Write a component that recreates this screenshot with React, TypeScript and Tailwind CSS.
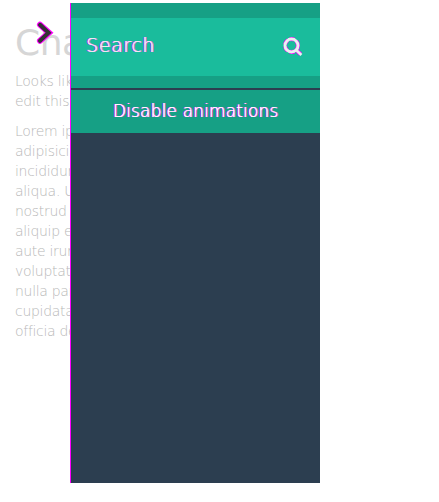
const lines = [
  'Lorem ip', 'adipisici', 'incididur', 'aliqua. U', 'nostrud', 'aliquip e', 'aute irur',
  'voluptat', 'nulla par', 'cupidata', 'officia de',
];

function SearchIcon() {
  return (
    <svg width="20" height="20" viewBox="0 0 20 20" fill="none">
      <circle cx="8.5" cy="8.5" r="6.5" stroke="#ff00ff" strokeWidth="4" strokeDasharray="5 2" />
      <path d="M13.2 13 L17.6 17.2" stroke="#ff00ff" strokeWidth="4" />
      <circle cx="8.5" cy="8.5" r="6.5" stroke="#ecf0f1" strokeWidth="2.9" />
      <path d="M13.4 13.2 L18.4 18" stroke="#ecf0f1" strokeWidth="2.6" />
    </svg>
  );
}

function Chevron() {
  return (
    <svg width="18" height="24" viewBox="0 0 18 24" fill="none">
      <path d="M4 3.8 L13 11.8 L4 19.8" stroke="#ff00ff" strokeWidth="6" strokeLinecap="round" />
      <path d="M4 3.8 L12.6 11.8 L4 19.8" stroke="#333333" strokeWidth="4" strokeLinecap="round" />
    </svg>
  );
}

export default function App() {
  return (
    <div className="relative h-[502px] w-[439px] overflow-hidden bg-white font-['DejaVu_Sans',sans-serif]">
      <main className="w-[90px] whitespace-nowrap pl-[15px] pt-[23px] text-[14px] font-extralight leading-5 tracking-[-0.3px] text-[#b8b8b8]">
        <h1 className="text-[36px] font-normal leading-10 tracking-[-0.5px] text-[#d6d6d6]">Cha</h1>
        <p className="mt-2">Looks lik<br />edit this</p>
        <p className="mt-2.5">
          {lines.map((line) => <span key={line} className="block">{line}</span>)}
        </p>
      </main>
      <div className="absolute left-9 top-[21px]"><Chevron /></div>
      <aside className="absolute left-[70px] top-[3px] flex h-[480px] w-[250px] flex-col border-l border-[#ff00ff] bg-[#2c3e50] text-[#ecf0f1]">
        <div className="bg-[#16a085] pb-3 pt-[15px]">
          <label className="flex h-[58px] items-center justify-between bg-[#1abc9c] pl-[15px] pr-[17px]">
            <span className="pb-1 text-[19px] font-extralight leading-6 tracking-[0.6px] [text-shadow:0.5px_0_#ecf0f1,-0.7px_0_#f0f,1px_0_#f0f]">Search</span>
            <SearchIcon />
          </label>
        </div>
        <button className="mt-0.5 h-[43px] bg-[#16a085] text-center text-[17px] font-extralight tracking-[0.15px] text-white [text-shadow:0.5px_0_#ffffff,-0.7px_0_#f0f,1px_0_#f0f]">
          Disable animations
        </button>
      </aside>
    </div>
  );
}
